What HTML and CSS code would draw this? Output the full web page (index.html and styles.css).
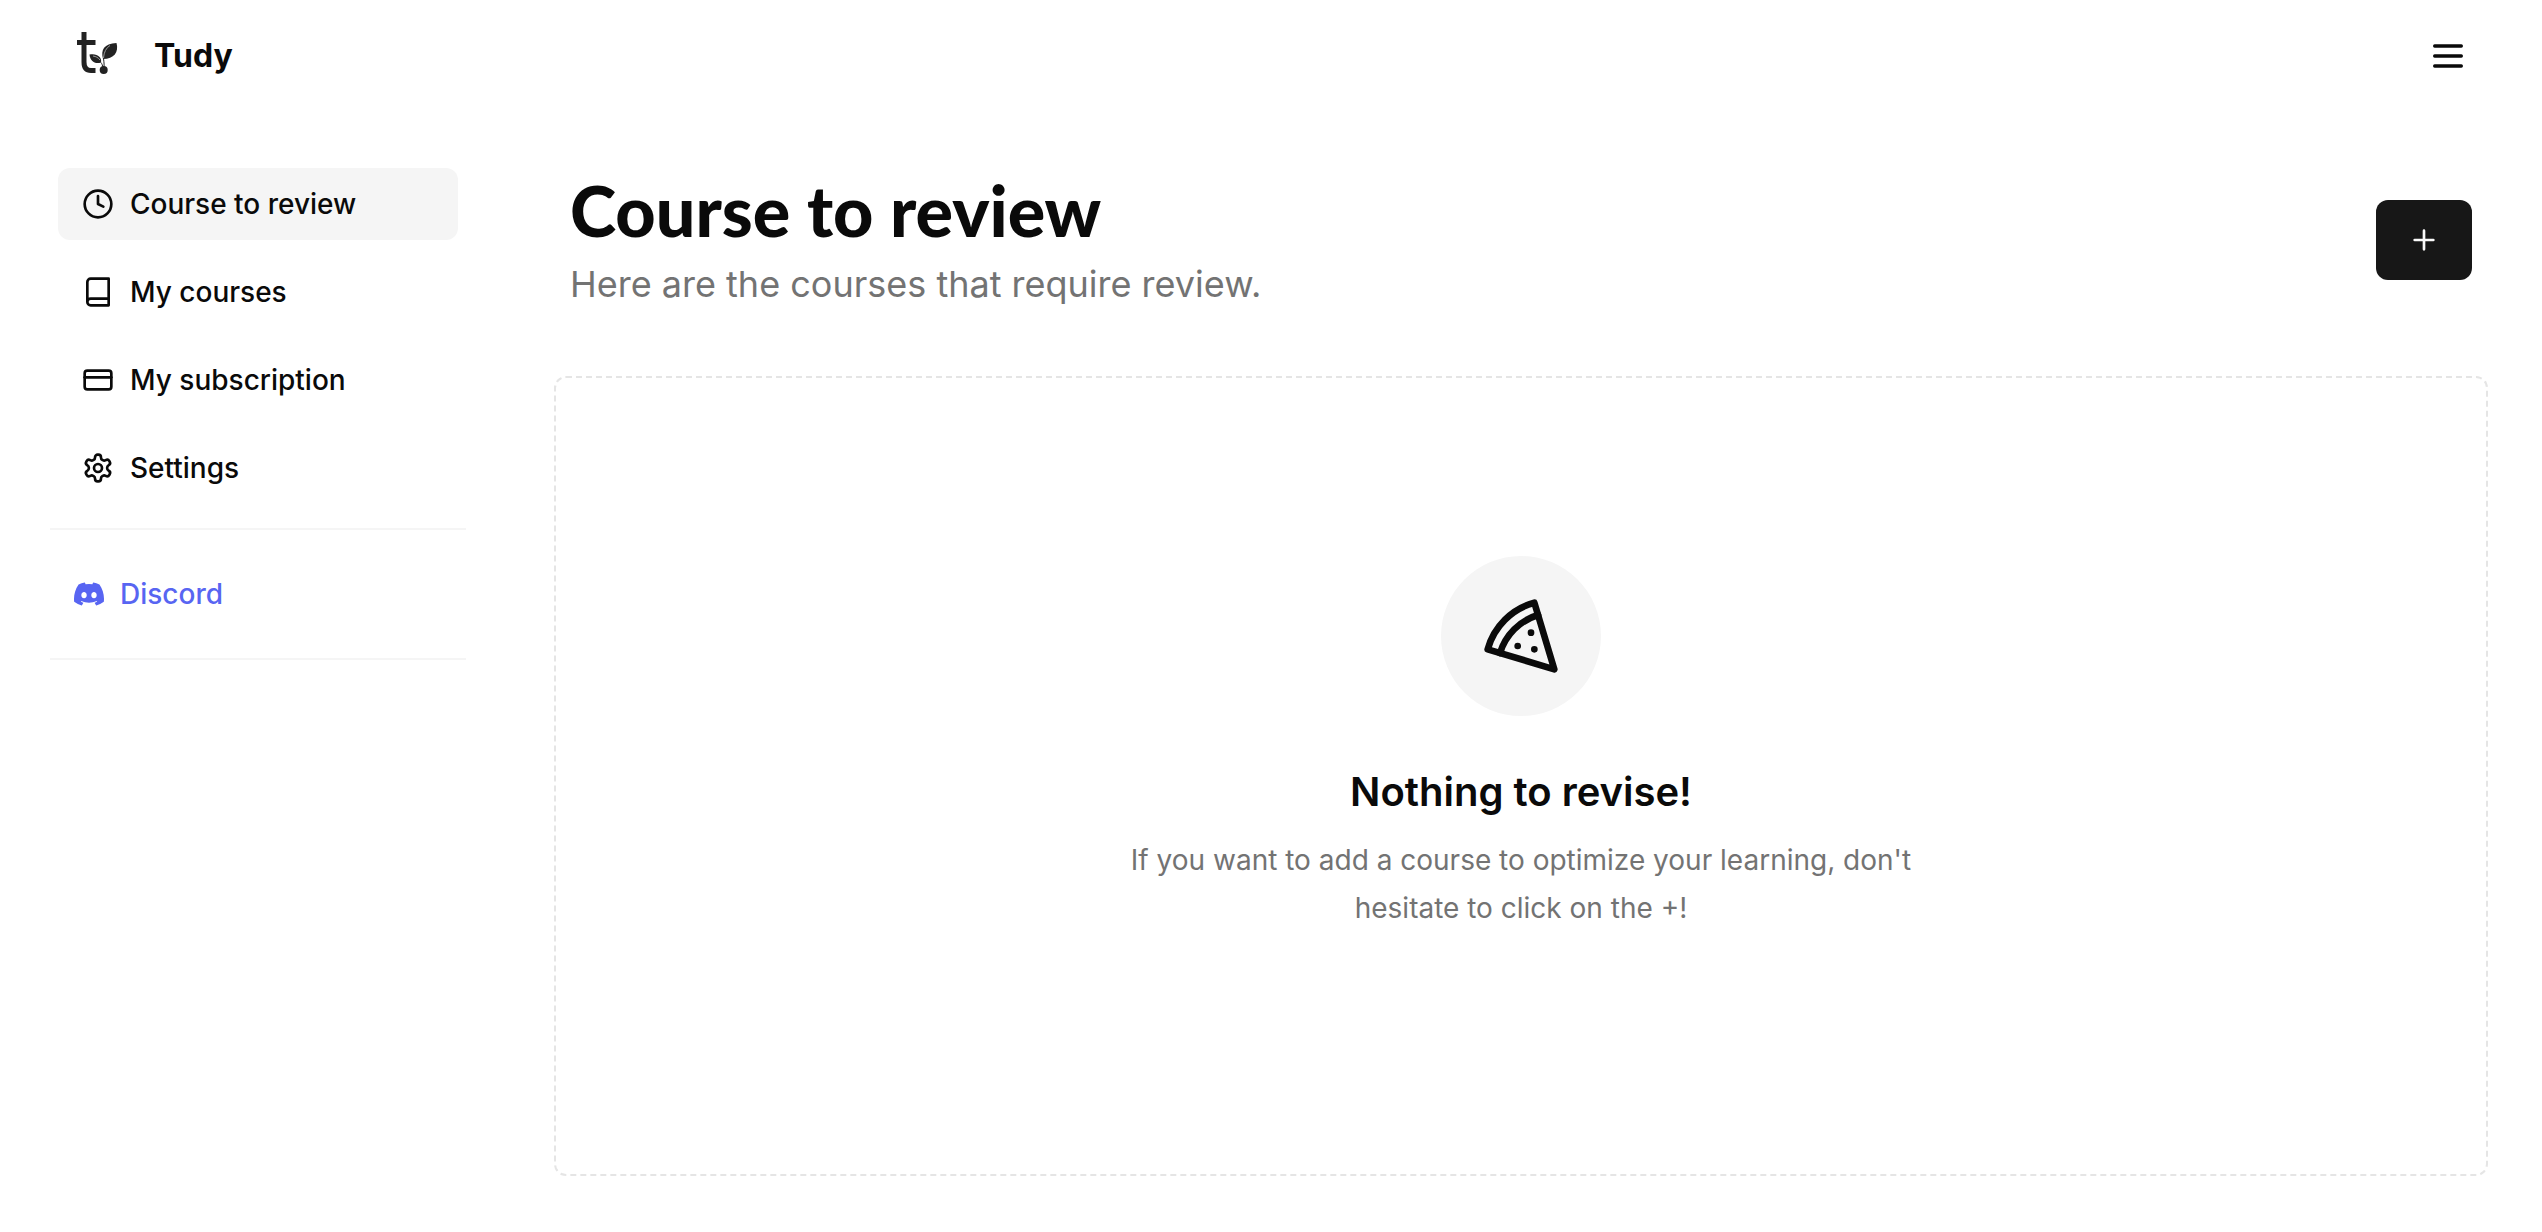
FILE: index.html
```
<!DOCTYPE html>
<html lang="en">
<head>
  <meta charset="UTF-8" />
  <meta name="viewport" content="width=device-width, initial-scale=1" />
  <title>Tudy - Course to review</title>
  <link rel="stylesheet" href="styles.css">
</head>
<body>
  <header class="topbar">
    <a class="brand" href="#">
      <svg class="brand-logo" viewBox="0 0 56 64" aria-hidden="true">
        <path class="logo-stem" d="M14 8V38Q14 46.500 21 46.500H25.500M7 18.500H25.500" />
        <path d="M33 35C30.500 26 34 19.500 46.500 19C49 28 44 35 33 35Z" />
        <path d="M31 38.500C25 40.500 20 37 19.500 30.500C27 29 32 33 31 38.500Z" />
        <path class="logo-vein" d="M33.500 34C34 28 36 24 40 21.500M30 36C28 33.500 26 32.500 23 32" />
        <path class="logo-twig" d="M33.700 46C34.500 42 34 38 33.500 34.500M33 44C32.500 41 32 40 31 38.500" />
        <circle cx="33.700" cy="46" r="4" />
      </svg>
      <span class="brand-name">Tudy</span>
    </a>
    <button class="menu-button" type="button" aria-label="Open menu">
      <svg class="icon" viewBox="0 0 24 24"><path d="M4 12h16M4 6h16M4 18h16" /></svg>
    </button>
  </header>

  <div class="layout">
    <aside class="sidebar">
      <nav class="nav">
        <a class="nav-link active" href="#">
          <svg class="icon" viewBox="0 0 24 24"><circle cx="12" cy="12" r="10" /><path d="M12 6v6l4 2" /></svg>
          Course to review
        </a>
        <a class="nav-link" href="#">
          <svg class="icon" viewBox="0 0 24 24"><path d="M4 19.500v-15A2.500 2.500 0 0 1 6.500 2H20v20H6.500a2.500 2.500 0 0 1 0-5H20" /></svg>
          My courses
        </a>
        <a class="nav-link" href="#">
          <svg class="icon" viewBox="0 0 24 24"><rect x="2" y="5" width="20" height="14" rx="2" /><path d="M2 10h20" /></svg>
          My subscription
        </a>
        <a class="nav-link" href="#">
          <svg class="icon" viewBox="0 0 24 24"><path d="M12.220 2h-.44a2 2 0 0 0-2 2v.18a2 2 0 0 1-1 1.730l-.43.25a2 2 0 0 1-2 0l-.15-.08a2 2 0 0 0-2.730.73l-.22.38a2 2 0 0 0 .73 2.730l.15.1a2 2 0 0 1 1 1.720v.51a2 2 0 0 1-1 1.740l-.15.09a2 2 0 0 0-.73 2.730l.22.38a2 2 0 0 0 2.730.73l.15-.08a2 2 0 0 1 2 0l.43.25a2 2 0 0 1 1 1.730V20a2 2 0 0 0 2 2h.44a2 2 0 0 0 2-2v-.18a2 2 0 0 1 1-1.730l.43-.25a2 2 0 0 1 2 0l.15.08a2 2 0 0 0 2.730-.73l.22-.39a2 2 0 0 0-.73-2.730l-.15-.08a2 2 0 0 1-1-1.740v-.5a2 2 0 0 1 1-1.740l.15-.09a2 2 0 0 0 .73-2.730l-.22-.38a2 2 0 0 0-2.730-.73l-.15.08a2 2 0 0 1-2 0l-.43-.25a2 2 0 0 1-1-1.730V4a2 2 0 0 0-2-2z" /><circle cx="12" cy="12" r="3" /></svg>
          Settings
        </a>
      </nav>
      <div class="community">
        <a class="discord-link" href="#">
          <svg class="discord-icon" viewBox="0 0 24 24"><path d="M20.317 4.370a19.791 19.791 0 0 0-4.885-1.515.074.074 0 0 0-.079.037c-.21.375-.444.864-.608 1.250a18.270 18.270 0 0 0-5.487 0 12.640 12.640 0 0 0-.617-1.250.077.077 0 0 0-.079-.037A19.736 19.736 0 0 0 3.677 4.370a.07.07 0 0 0-.032.027C.533 9.046-.32 13.580.099 18.057a.082.082 0 0 0 .031.057 19.900 19.900 0 0 0 5.993 3.030.078.078 0 0 0 .084-.028c.462-.63.874-1.295 1.226-1.994a.076.076 0 0 0-.041-.106 13.107 13.107 0 0 1-1.872-.892.077.077 0 0 1-.008-.128c.126-.094.252-.192.372-.291a.074.074 0 0 1 .077-.01c3.928 1.793 8.180 1.793 12.062 0a.074.074 0 0 1 .078.009c.12.1.246.198.373.292a.077.077 0 0 1-.006.127 12.299 12.299 0 0 1-1.873.892.077.077 0 0 0-.041.107c.36.698.772 1.362 1.225 1.993a.076.076 0 0 0 .084.028 19.839 19.839 0 0 0 6.002-3.030.077.077 0 0 0 .032-.054c.5-5.177-.838-9.674-3.549-13.660a.061.061 0 0 0-.031-.03zM8.020 15.330c-1.183 0-2.157-1.085-2.157-2.419 0-1.333.956-2.419 2.157-2.419 1.210 0 2.176 1.096 2.157 2.420 0 1.333-.956 2.418-2.157 2.418zm7.975 0c-1.183 0-2.157-1.085-2.157-2.419 0-1.333.955-2.419 2.157-2.419 1.210 0 2.176 1.096 2.157 2.420 0 1.333-.946 2.418-2.157 2.418z" /></svg>
          Discord
        </a>
      </div>
    </aside>

    <main class="content">
      <div class="page-header">
        <div>
          <h1>Course to review</h1>
          <p class="subtitle">Here are the courses that require review.</p>
        </div>
        <button class="add-button" type="button" aria-label="Add a course">
          <svg class="icon" viewBox="0 0 24 24"><path d="M5 12h14M12 5v14" /></svg>
        </button>
      </div>

      <section class="empty-state">
        <div class="empty-icon">
          <svg class="icon" viewBox="0 0 24 24"><path d="M15 11h.01M11 15h.01M16 16h.01" /><path d="m2 16 20 6-6-20A20 20 0 0 0 2 16" /><path d="M5.710 17.110a17.040 17.040 0 0 1 11.400-11.400" /></svg>
        </div>
        <h2>Nothing to revise!</h2>
        <p>If you want to add a course to optimize your learning, don't hesitate to click on the +!</p>
      </section>
    </main>
  </div>
</body>
</html>
```
FILE: styles.css
```
* {
  box-sizing: border-box;
}

body {
  margin: 0;
  font-family: Inter, "Liberation Sans", sans-serif;
  font-size: 28px;
  color: #0a0a0a;
  background-color: #fff;
}

h1, h2, p {
  margin: 0;
}

a {
  color: inherit;
  text-decoration: none;
}

button {
  padding: 0;
  border: none;
  background: none;
  color: inherit;
  cursor: pointer;
}

.icon {
  display: block;
  width: 32px;
  height: 32px;
  fill: none;
  stroke: currentColor;
  stroke-width: 2;
  stroke-linecap: round;
  stroke-linejoin: round;
}

/* Top bar */
.topbar {
  display: flex;
  align-items: center;
  justify-content: space-between;
  height: 112px;
  padding: 0 74px 0 70px;
}

.brand {
  display: flex;
  align-items: center;
  gap: 28px;
}

.brand-logo {
  width: 56px;
  height: 64px;
  fill: #222;
}

.logo-stem {
  fill: none;
  stroke: #222;
  stroke-width: 5;
}

.logo-vein {
  fill: none;
  stroke: #999;
  stroke-width: 1;
}

.logo-twig {
  fill: none;
  stroke: #222;
  stroke-width: 1;
}

.brand-name {
  font-size: 32px;
  font-weight: 700;
  line-height: 40px;
}

.menu-button .icon {
  width: 40px;
  height: 40px;
}

.layout {
  display: flex;
  align-items: flex-start;
  gap: 88px;
  padding: 56px 54px 56px 50px;
}

/* Sidebar */
.sidebar {
  flex: 0 0 416px;
}

.nav {
  display: flex;
  flex-direction: column;
  gap: 16px;
  padding: 0 8px 24px;
}

.nav-link {
  display: flex;
  align-items: center;
  gap: 16px;
  height: 72px;
  padding: 0 24px;
  border-radius: 12px;
  font-weight: 500;
}

.nav-link.active,
.nav-link:hover {
  background-color: #f5f5f5;
}

.community {
  padding: 40px 24px;
  border-top: 2px solid #f5f5f5;
  border-bottom: 2px solid #f5f5f5;
}

.discord-link {
  display: flex;
  align-items: center;
  gap: 16px;
  height: 48px;
  font-weight: 500;
  color: #5865f2;
}

.discord-icon {
  width: 30px;
  height: 30px;
  fill: currentColor;
}

/* Content */
.content {
  flex: 1;
  min-width: 0;
}

.page-header {
  display: flex;
  align-items: center;
  justify-content: space-between;
  padding: 0 16px;
  margin-bottom: 64px;
}

h1 {
  font-family: Lato, Inter, sans-serif;
  font-size: 70px;
  font-weight: 900;
  line-height: 84px;
}

.subtitle {
  margin-top: 4px;
  font-size: 36px;
  line-height: 56px;
  color: #737373;
}

.add-button {
  display: flex;
  align-items: center;
  justify-content: center;
  width: 96px;
  height: 80px;
  border-radius: 12px;
  background-color: #171717;
  color: #fafafa;
}

/* Empty state */
.empty-state {
  display: flex;
  flex-direction: column;
  align-items: center;
  padding: 178px 32px 242px;
  border: 2px dashed #e5e5e5;
  border-radius: 12px;
  text-align: center;
}

.empty-icon {
  display: flex;
  align-items: center;
  justify-content: center;
  width: 160px;
  height: 160px;
  border-radius: 50%;
  background-color: #f5f5f5;
}

.empty-icon .icon {
  width: 80px;
  height: 80px;
}

.empty-state h2 {
  margin-top: 48px;
  font-size: 40px;
  font-weight: 600;
  line-height: 56px;
}

.empty-state p {
  max-width: 840px;
  margin-top: 16px;
  line-height: 48px;
  color: #737373;
}
```
